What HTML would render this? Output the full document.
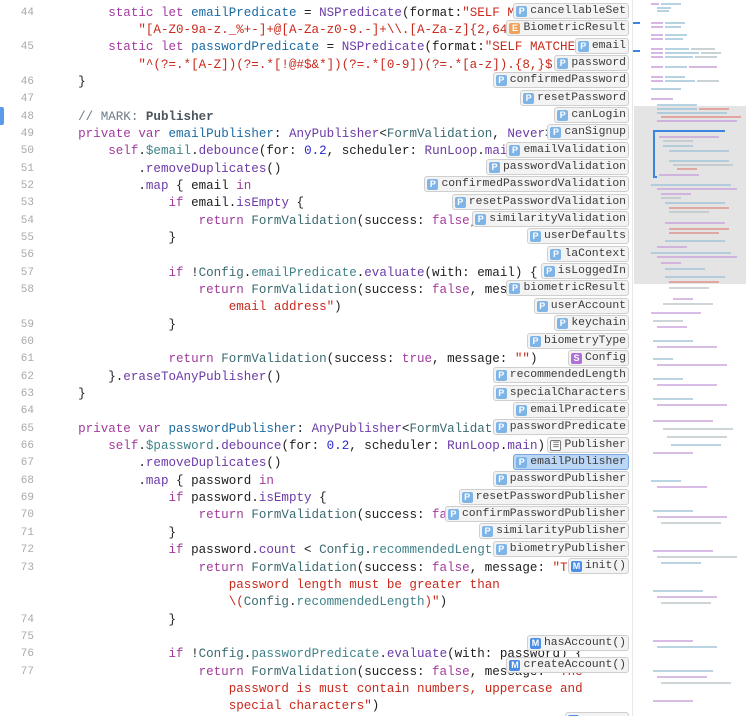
<!DOCTYPE html>
<html><head><meta charset="utf-8"><style>
html,body{margin:0;padding:0;background:#fff;width:746px;height:716px;overflow:hidden;position:relative}
pre{margin:0;font-family:"Liberation Mono",monospace;line-height:17.35px;position:absolute;top:4.5px}
#code{left:48px;font-size:12.55px;color:#1d1d1d}
#nums{left:0;width:34px;text-align:right;font-size:11px;color:#a9a9a9}
.k{color:#a23a9c}.s{color:#c9281b}.t{color:#6b3aa8}.p{color:#3a6a70}.q{color:#3f8389}.n{color:#2a28d0}.c{color:#6d7a86}.d{color:#1a6aa3}.b{color:#4a555e;font-weight:bold}
.it{position:absolute;right:117px;height:16px;box-sizing:border-box;border:1px solid #cfcfcf;border-radius:3px;background:#f3f3f3;font-family:"Liberation Mono",monospace;font-size:11.4px;line-height:13px;color:#3a3a3a;padding:0 2px 0 2px;white-space:nowrap;display:flex;align-items:center}
.it i{display:inline-block;width:11px;height:11px;border-radius:2px;background:#7fb5e6;color:#fff;font-style:normal;font-family:"Liberation Sans",sans-serif;font-size:9px;line-height:11px;text-align:center;margin-right:3px;font-weight:bold}
.it i.e{background:#f0a35a}.it i.sx{background:#b06fd8}.it i.m{background:#4a8ee6}.it i.l{background:#fff;border:1px solid #777;color:#777;width:9px;height:9px;line-height:9px;font-size:7px}
.sel{background:#bcd6f5;border-color:#7aa7e0}
#mm{position:absolute;left:632px;top:0;width:114px;height:716px;border-left:1px solid #e8e8e8;background:#fff}
</style></head><body>
<div style="position:absolute;left:0;top:107px;width:4px;height:18px;background:#5b9ae8;border-radius:0 2px 2px 0"></div>
<pre id="nums">44

45

46
47
48
49
50
51
52
53
54
55
56
57
58

59
60
61
62
63
64
65
66
67
68
69
70
71
72
73


74
75
76
77</pre>
<pre id="code">        <span class="k">static</span> <span class="k">let</span> <span class="d">emailPredicate</span> = <span class="t">NSPredicate</span>(format:<span class="s">"SELF MATCHES %@",</span>
            <span class="s">"[A-Z0-9a-z._%+-]+@[A-Za-z0-9.-]+\\.[A-Za-z]{2,64}")</span>
        <span class="k">static</span> <span class="k">let</span> <span class="d">passwordPredicate</span> = <span class="t">NSPredicate</span>(format:<span class="s">"SELF MATCHES %@",</span>
            <span class="s">"^(?=.*[A-Z])(?=.*[!@#$&amp;*])(?=.*[0-9])(?=.*[a-z]).{8,}$")</span>
    }

    <span class="c">// MARK: </span><span class="b">Publisher</span>
    <span class="k">private</span> <span class="k">var</span> <span class="d">emailPublisher</span>: <span class="t">AnyPublisher</span>&lt;<span class="p">FormValidation</span>, <span class="t">Never</span>&gt; {
        <span class="k">self</span>.<span class="q">$email</span>.<span class="t">debounce</span>(for: <span class="n">0.2</span>, scheduler: <span class="t">RunLoop</span>.<span class="t">main</span>)
            .<span class="t">removeDuplicates</span>()
            .<span class="t">map</span> { email <span class="k">in</span>
                <span class="k">if</span> email.<span class="t">isEmpty</span> {
                    <span class="k">return</span> <span class="p">FormValidation</span>(success: <span class="k">false</span>, message: <span class="s">"Email</span>
                }

                <span class="k">if</span> !<span class="p">Config</span>.<span class="q">emailPredicate</span>.<span class="t">evaluate</span>(with: email) {
                    <span class="k">return</span> <span class="p">FormValidation</span>(success: <span class="k">false</span>, message: <span class="s">"Invalid</span>
                        <span class="s">email address"</span>)
                }

                <span class="k">return</span> <span class="p">FormValidation</span>(success: <span class="k">true</span>, message: <span class="s">""</span>)
        }.<span class="t">eraseToAnyPublisher</span>()
    }

    <span class="k">private</span> <span class="k">var</span> <span class="d">passwordPublisher</span>: <span class="t">AnyPublisher</span>&lt;<span class="p">FormValidation</span>, <span class="t">Never</span>&gt; {
        <span class="k">self</span>.<span class="q">$password</span>.<span class="t">debounce</span>(for: <span class="n">0.2</span>, scheduler: <span class="t">RunLoop</span>.<span class="t">main</span>)
            .<span class="t">removeDuplicates</span>()
            .<span class="t">map</span> { password <span class="k">in</span>
                <span class="k">if</span> password.<span class="t">isEmpty</span> {
                    <span class="k">return</span> <span class="p">FormValidation</span>(success: <span class="k">false</span>, message: <span class="s">"Pass</span>
                }
                <span class="k">if</span> password.<span class="t">count</span> &lt; <span class="p">Config</span>.<span class="q">recommendedLength</span> {
                    <span class="k">return</span> <span class="p">FormValidation</span>(success: <span class="k">false</span>, message: <span class="s">"The</span>
                        <span class="s">password length must be greater than</span>
                        <span class="s">\(</span><span class="p">Config</span>.<span class="q">recommendedLength</span><span class="s">)"</span>)
                }

                <span class="k">if</span> !<span class="p">Config</span>.<span class="q">passwordPredicate</span>.<span class="t">evaluate</span>(with: password) {
                    <span class="k">return</span> <span class="p">FormValidation</span>(success: <span class="k">false</span>, message: <span class="s">"The</span>
                        <span class="s">password is must contain numbers, uppercase and</span>
                        <span class="s">special characters"</span>)</pre>

<div class="it" style="top:3px"><i>P</i>cancellableSet</div>
<div class="it" style="top:20px"><i class="e">E</i>BiometricResult</div>
<div class="it" style="top:38px"><i>P</i>email</div>
<div class="it" style="top:55px"><i>P</i>password</div>
<div class="it" style="top:72px"><i>P</i>confirmedPassword</div>
<div class="it" style="top:90px"><i>P</i>resetPassword</div>
<div class="it" style="top:107px"><i>P</i>canLogin</div>
<div class="it" style="top:124px"><i>P</i>canSignup</div>
<div class="it" style="top:142px"><i>P</i>emailValidation</div>
<div class="it" style="top:159px"><i>P</i>passwordValidation</div>
<div class="it" style="top:176px"><i>P</i>confirmedPasswordValidation</div>
<div class="it" style="top:194px"><i>P</i>resetPasswordValidation</div>
<div class="it" style="top:211px"><i>P</i>similarityValidation</div>
<div class="it" style="top:228px"><i>P</i>userDefaults</div>
<div class="it" style="top:246px"><i>P</i>laContext</div>
<div class="it" style="top:263px"><i>P</i>isLoggedIn</div>
<div class="it" style="top:280px"><i>P</i>biometricResult</div>
<div class="it" style="top:298px"><i>P</i>userAccount</div>
<div class="it" style="top:315px"><i>P</i>keychain</div>
<div class="it" style="top:333px"><i>P</i>biometryType</div>
<div class="it" style="top:350px"><i class="sx">S</i>Config</div>
<div class="it" style="top:367px"><i>P</i>recommendedLength</div>
<div class="it" style="top:385px"><i>P</i>specialCharacters</div>
<div class="it" style="top:402px"><i>P</i>emailPredicate</div>
<div class="it" style="top:419px"><i>P</i>passwordPredicate</div>
<div class="it" style="top:437px"><i class="l">☰</i>Publisher</div>
<div class="it sel" style="top:454px"><i>P</i>emailPublisher</div>
<div class="it" style="top:471px"><i>P</i>passwordPublisher</div>
<div class="it" style="top:489px"><i>P</i>resetPasswordPublisher</div>
<div class="it" style="top:506px"><i>P</i>confirmPasswordPublisher</div>
<div class="it" style="top:523px"><i>P</i>similarityPublisher</div>
<div class="it" style="top:541px"><i>P</i>biometryPublisher</div>
<div class="it" style="top:558px"><i class="m">M</i>init()</div>
<div class="it" style="top:635px"><i class="m">M</i>hasAccount()</div>
<div class="it" style="top:657px"><i class="m">M</i>createAccount()</div>
<div class="it" style="top:712px;width:64px"><i class="m">M</i></div>

<div id="mm">
<svg width="114" height="716" xmlns="http://www.w3.org/2000/svg">
<rect x="1" y="106" width="113" height="178" fill="#e4e4e4"/>
<g opacity="0.75">
<rect x="18" y="3" width="8" height="2" fill="#c9a0dc"/><rect x="28" y="3" width="20" height="2" fill="#9fc3d8"/>
<rect x="24" y="7" width="14" height="2" fill="#9fc3d8"/><rect x="24" y="10" width="12" height="2" fill="#9fc3d8"/>
<rect x="18" y="22" width="12" height="2" fill="#c9a0dc"/><rect x="32" y="22" width="20" height="2" fill="#9fc3d8"/>
<rect x="18" y="26" width="12" height="2" fill="#c9a0dc"/><rect x="32" y="26" width="16" height="2" fill="#9fc3d8"/>
<rect x="18" y="34" width="12" height="2" fill="#c9a0dc"/><rect x="32" y="34" width="22" height="2" fill="#9fc3d8"/>
<rect x="18" y="38" width="12" height="2" fill="#c9a0dc"/><rect x="32" y="38" width="18" height="2" fill="#9fc3d8"/>
<rect x="18" y="48" width="12" height="2" fill="#c9a0dc"/><rect x="32" y="48" width="24" height="2" fill="#9fc3d8"/><rect x="58" y="48" width="24" height="2" fill="#b8c4c8"/>
<rect x="18" y="52" width="12" height="2" fill="#c9a0dc"/><rect x="32" y="52" width="34" height="2" fill="#9fc3d8"/><rect x="68" y="52" width="20" height="2" fill="#b8c4c8"/>
<rect x="18" y="56" width="12" height="2" fill="#c9a0dc"/><rect x="32" y="56" width="28" height="2" fill="#9fc3d8"/><rect x="62" y="56" width="22" height="2" fill="#b8c4c8"/>
<rect x="18" y="66" width="12" height="2" fill="#c9a0dc"/><rect x="32" y="66" width="22" height="2" fill="#9fc3d8"/><rect x="56" y="66" width="28" height="2" fill="#c9a0dc"/>
<rect x="18" y="76" width="12" height="2" fill="#c9a0dc"/><rect x="32" y="76" width="20" height="2" fill="#9fc3d8"/>
<rect x="18" y="80" width="12" height="2" fill="#c9a0dc"/><rect x="32" y="80" width="30" height="2" fill="#9fc3d8"/><rect x="64" y="80" width="22" height="2" fill="#b8c4c8"/>
<rect x="18" y="88" width="30" height="2" fill="#9fc3d8"/><rect x="18" y="98" width="22" height="2" fill="#c9a0dc"/>
<rect x="24" y="104" width="40" height="2" fill="#9fc3d8"/>
<rect x="24" y="108" width="40" height="2" fill="#9fc3d8"/><rect x="66" y="108" width="30" height="2" fill="#e08f88"/>
<rect x="24" y="112" width="70" height="2" fill="#9fc3d8"/>
<rect x="28" y="116" width="80" height="2" fill="#e08f88"/>
<rect x="24" y="120" width="80" height="2" fill="#c9a0dc"/>
<rect x="24" y="130" width="30" height="2" fill="#b8b8b8"/>
</g>
<rect x="20" y="130" width="72" height="2" fill="#3c84e0"/>
<rect x="20" y="130" width="2" height="48" fill="#3c84e0"/>
<rect x="20" y="176" width="4" height="2" fill="#3c84e0"/>
<rect x="-1" y="22" width="8" height="2" fill="#3c84e0"/>
<rect x="-1" y="50" width="8" height="2" fill="#3c84e0"/>
<g opacity="0.7">
<rect x="26" y="136" width="60" height="2" fill="#c9a0dc"/><rect x="30" y="140" width="30" height="2" fill="#b8c4c8"/>
<rect x="30" y="145" width="30" height="2" fill="#9fc3d8"/><rect x="36" y="150" width="60" height="2" fill="#9fc3d8"/>
<rect x="36" y="160" width="60" height="2" fill="#9fc3d8"/><rect x="40" y="164" width="60" height="2" fill="#b8c4c8"/><rect x="44" y="168" width="20" height="2" fill="#e08f88"/>
<rect x="26" y="174" width="40" height="2" fill="#c9a0dc"/>
<rect x="18" y="184" width="80" height="2" fill="#9fc3d8"/><rect x="24" y="188" width="80" height="2" fill="#c9a0dc"/>
<rect x="28" y="193" width="30" height="2" fill="#c9a0dc"/><rect x="28" y="197" width="20" height="2" fill="#b8c4c8"/>
<rect x="32" y="202" width="60" height="2" fill="#9fc3d8"/><rect x="36" y="207" width="60" height="2" fill="#e08f88"/><rect x="36" y="211" width="40" height="2" fill="#b8c4c8"/>
<rect x="32" y="222" width="60" height="2" fill="#c9a0dc"/><rect x="36" y="228" width="60" height="2" fill="#e08f88"/><rect x="36" y="232" width="50" height="2" fill="#e08f88"/>
<rect x="32" y="240" width="60" height="2" fill="#9fc3d8"/><rect x="24" y="246" width="30" height="2" fill="#c9a0dc"/>
<rect x="18" y="252" width="80" height="2" fill="#9fc3d8"/><rect x="24" y="256" width="80" height="2" fill="#c9a0dc"/>
<rect x="28" y="262" width="20" height="2" fill="#c9a0dc"/><rect x="32" y="268" width="40" height="2" fill="#9fc3d8"/>
<rect x="32" y="276" width="60" height="2" fill="#9fc3d8"/><rect x="36" y="281" width="50" height="2" fill="#e08f88"/>
<rect x="36" y="287" width="40" height="2" fill="#b8c4c8"/>
<rect x="40" y="298" width="20" height="2" fill="#c9a0dc"/><rect x="30" y="303" width="50" height="2" fill="#b8c4c8"/>
<rect x="18" y="312" width="50" height="2" fill="#c9a0dc"/><rect x="20" y="320" width="30" height="2" fill="#b8c4c8"/><rect x="24" y="326" width="30" height="2" fill="#c9a0dc"/>
<rect x="20" y="340" width="40" height="2" fill="#9fc3d8"/><rect x="24" y="346" width="60" height="2" fill="#c9a0dc"/>
<rect x="20" y="358" width="20" height="2" fill="#9fc3d8"/><rect x="24" y="364" width="70" height="2" fill="#c9a0dc"/>
<rect x="20" y="378" width="30" height="2" fill="#9fc3d8"/><rect x="24" y="384" width="60" height="2" fill="#c9a0dc"/>
<rect x="20" y="398" width="40" height="2" fill="#9fc3d8"/><rect x="24" y="404" width="70" height="2" fill="#c9a0dc"/>
<rect x="20" y="420" width="60" height="2" fill="#c9a0dc"/><rect x="30" y="428" width="70" height="2" fill="#b8c4c8"/>
<rect x="34" y="436" width="60" height="2" fill="#b8c4c8"/><rect x="38" y="444" width="50" height="2" fill="#9fc3d8"/>
<rect x="20" y="452" width="40" height="2" fill="#c9a0dc"/>
<rect x="18" y="480" width="30" height="2" fill="#9fc3d8"/><rect x="24" y="486" width="50" height="2" fill="#c9a0dc"/>
<rect x="20" y="510" width="40" height="2" fill="#9fc3d8"/><rect x="24" y="516" width="70" height="2" fill="#c9a0dc"/><rect x="28" y="522" width="60" height="2" fill="#b8c4c8"/>
<rect x="20" y="550" width="60" height="2" fill="#c9a0dc"/><rect x="24" y="556" width="80" height="2" fill="#b8c4c8"/><rect x="28" y="562" width="40" height="2" fill="#9fc3d8"/>
<rect x="20" y="590" width="50" height="2" fill="#9fc3d8"/><rect x="24" y="596" width="60" height="2" fill="#c9a0dc"/><rect x="28" y="602" width="50" height="2" fill="#b8c4c8"/>
<rect x="20" y="640" width="40" height="2" fill="#c9a0dc"/><rect x="24" y="646" width="60" height="2" fill="#9fc3d8"/>
<rect x="20" y="670" width="60" height="2" fill="#9fc3d8"/><rect x="24" y="676" width="50" height="2" fill="#c9a0dc"/><rect x="28" y="682" width="70" height="2" fill="#b8c4c8"/>
<rect x="20" y="700" width="40" height="2" fill="#c9a0dc"/>
</g>
</svg>
</div>
</body></html>
